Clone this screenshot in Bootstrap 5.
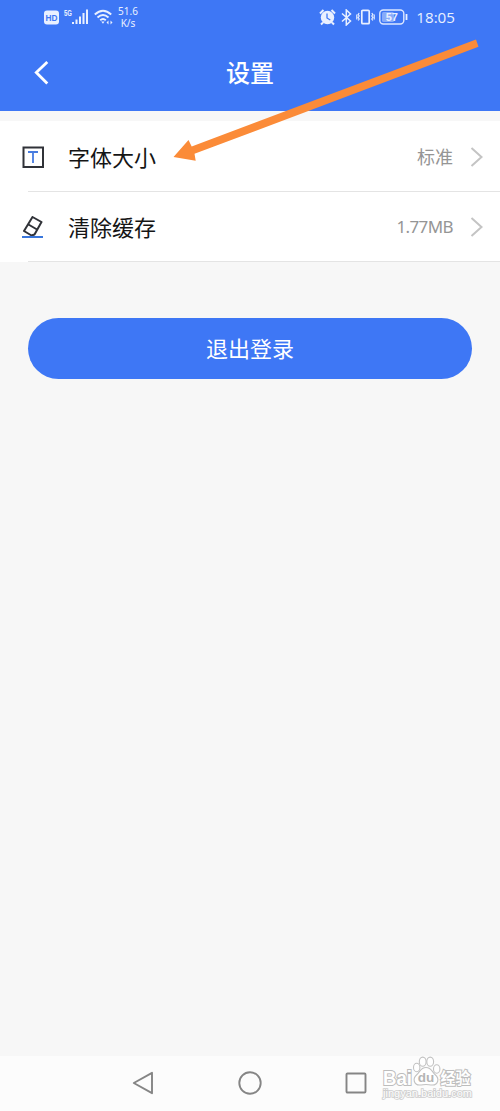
<!DOCTYPE html>
<html lang="zh-CN">
<head>
<meta charset="utf-8">
<meta name="viewport" content="width=device-width, initial-scale=1">
<title>设置</title>
<link href="https://cdn.jsdelivr.net/npm/bootstrap@5.3.0/dist/css/bootstrap.min.css" rel="stylesheet">
<style>
body{font-family:"Noto Sans","Noto Sans CJK SC",sans-serif;background:#f7f7f7;color:#151515}
svg{display:block;flex:none}
.screen{height:1111px}
.bg-brand{background:#3e77f5}
.status{height:34px;padding:0 45px 0 44px;color:#e9f0ff}
.speed{font-size:10px;line-height:12px;width:26px;margin-left:2px}
.clock{font-size:15.2px;line-height:20px;margin-left:8px;font-family:"Open Sans","Noto Sans",sans-serif}
.titlebar{height:77px;padding:0 34px}
.titlebar h1{font-size:24px;line-height:30px;font-weight:500}
.side{width:16px}
.settings{margin-top:10px}
.settings .list-group-item{height:71px;padding:0 17px 0 22px;border:0;background:#fff;color:inherit}
.settings .list-group-item + .list-group-item{height:70px}
.settings .list-group-item::after{content:"";position:absolute;left:28px;right:0;bottom:0;height:1px;background:#e4e4e4}
.name{font-size:22px;line-height:30px;margin-left:24px}
.value{font-size:18px;line-height:26px;color:#959595;margin-right:17px}
.size-value{font-size:17px;letter-spacing:-.6px}
.logout{height:61px;margin:56px 28px 0;font-size:22px;color:#fff;line-height:30px;padding:0 0 2px}
.logout:hover{background:#3e77f5;color:#fff}
.sysnav{height:55px;background:#fcfcfc;padding:0 133px 2px 132px}
.pointer{left:170px;top:36px;pointer-events:none}
.watermark{left:380px;bottom:8px}
</style>
</head>
<body>
<div class="screen d-flex flex-column position-relative overflow-hidden">
  <header class="bg-brand text-white">
    <div class="status d-flex align-items-center">
      <svg width="15" height="15" viewBox="0 0 15 15"><rect width="15" height="14" y=".5" rx="3" fill="#e9f0ff"/><text x="7.5" y="11" text-anchor="middle" font-size="8.6" font-weight="700" font-family="Liberation Sans, sans-serif" fill="#3e77f5" textLength="12" lengthAdjust="spacingAndGlyphs">HD</text></svg>
      <svg class="ms-1" width="27" height="18" viewBox="0 0 27 18" fill="#e9f0ff"><text x="1" y="7.5" font-size="8.5" font-weight="700" font-family="Liberation Sans, sans-serif" textLength="8" lengthAdjust="spacingAndGlyphs">5G</text><path d="M9 14h2v2H9zM12.500 11.500h2V16h-2zM16 8.500h2V16h-2zM19.500 5h2v11h-2zM23 1.500h2V16h-2z"/></svg>
      <svg class="ms-1" width="19" height="18" viewBox="0 0 19 18" fill="none" stroke="#e9f0ff" stroke-width="1.900"><path d="M.8 6.500Q9 -1.200 17.200 6.500M3.500 9.500Q9 4.300 14.500 9.500M6.200 12.300Q9 9.800 11.800 12.300"/><path d="M7.200 13.500L9 15.700L10.500 13.500Z" fill="#e9f0ff" stroke="none"/><path d="M12.500 14.500l2-2v4zM18.500 14.500l-2-2v4z" fill="#e9f0ff" stroke="none"/></svg>
      <div class="speed text-center">51.6<br>K/s</div>
      <svg class="ms-auto" width="17" height="17" viewBox="0 0 17 17"><circle cx="8.500" cy="8.500" r="6.700" fill="#e9f0ff"/><path d="M1 4.500L4.500 1M12.500 1L16 4.500M4 13.500l-2 2M13 13.500l2 2" stroke="#e9f0ff" stroke-width="2"/><path d="M8 4.500v4.500l3.300 2" fill="none" stroke="#3e77f5" stroke-width="1.300"/></svg>
      <svg style="margin-left:5px" width="11" height="17" viewBox="0 0 11 17" fill="none" stroke="#e9f0ff" stroke-width="1.500"><path d="M1 4.500l8.500 7.500-4.200 4V1l4.200 4L1 12.500"/></svg>
      <svg class="ms-1" width="19" height="16" viewBox="0 0 19 16" fill="none" stroke="#e9f0ff"><rect x="5.800" y="1.300" width="7.400" height="13.400" rx="1" stroke-width="1.700"/><path d="M3.200 4l-1 1.500 1 1.500-1 1.500 1 1.500-1 1.500M15.800 4l1 1.500-1 1.500 1 1.500-1 1.500 1 1.500M.8 5.500v5M18.200 5.500v5" stroke-width="1.200"/></svg>
      <svg class="ms-1" width="29" height="16" viewBox="0 0 29 16"><rect x=".8" y="1" width="24" height="14" rx="3.500" fill="none" stroke="#dce7ff" stroke-width="1.400"/><rect x="3" y="3" width="12" height="10" rx="1.500" fill="#87abfa"/><path d="M27.500 5v6" stroke="#e9f0ff" stroke-width="1.800"/><text x="12.800" y="12" text-anchor="middle" font-size="11" font-weight="700" font-family="Liberation Sans, sans-serif" fill="#e9f0ff">57</text></svg>
      <span class="clock">18:05</span>
    </div>
    <div class="titlebar d-flex justify-content-between align-items-center">
      <svg class="side" width="16" height="24" viewBox="0 0 16 24"><path d="M13.300 1L2.300 11.500l11 11" fill="none" stroke="#fff" stroke-width="2.800"/></svg>
      <h1 class="m-0">设置</h1>
      <span class="side"></span>
    </div>
  </header>

  <main class="flex-grow-1">
    <div class="settings list-group list-group-flush">
      <div class="list-group-item d-flex align-items-center">
        <svg width="22" height="22" viewBox="0 0 22 22" fill="none"><rect x="1.500" y="1.500" width="19.500" height="19.500" stroke="#303238" stroke-width="2"/><path d="M6 6h10M11 6v11" stroke="#477ce0" stroke-width="1.800"/></svg>
        <span class="name">字体大小</span>
        <span class="value ms-auto">标准</span>
        <svg width="13" height="20" viewBox="0 0 13 20"><path d="M1.500 1l10 9-10 9" fill="none" stroke="#c4c4c4" stroke-width="2"/></svg>
      </div>
      <div class="list-group-item d-flex align-items-center">
        <svg width="22" height="22" viewBox="0 0 22 22" fill="none"><path d="M10.500 1L19.500 6 12.500 18.500 9.500 19.500 2 15zM6.500 8.500l8.500 5" stroke="#303238" stroke-width="2" stroke-linejoin="round"/><path d="M0 21h21" stroke="#3976dc" stroke-width="2"/></svg>
        <span class="name">清除缓存</span>
        <span class="value size-value ms-auto">1.77MB</span>
        <svg width="13" height="20" viewBox="0 0 13 20"><path d="M1.500 1l10 9-10 9" fill="none" stroke="#c4c4c4" stroke-width="2"/></svg>
      </div>
    </div>
    <div class="d-grid"><button type="button" class="btn bg-brand rounded-pill logout border-0">退出登录</button></div>
  </main>

  <nav class="sysnav d-flex align-items-center justify-content-between">
    <svg width="22" height="24" viewBox="0 0 22 24"><path d="M20 1.800v20.400L1.800 12z" fill="none" stroke="#858585" stroke-width="1.900" stroke-linejoin="round"/></svg>
    <svg width="24" height="24" viewBox="0 0 24 24"><circle cx="12" cy="12" r="10.700" fill="none" stroke="#858585" stroke-width="1.900"/></svg>
    <svg width="22" height="22" viewBox="0 0 22 22"><rect x="1.500" y="1.500" width="19" height="19" rx="1" fill="none" stroke="#858585" stroke-width="1.900"/></svg>
  </nav>

  <svg class="pointer position-absolute" width="312" height="128" viewBox="0 0 312 128"><path d="M306 3.500L308.500 10.800 24.500 117.800 25.700 124.800 3.500 121 18.500 104 21.700 110.500z" fill="#fb8b38"/></svg>

  <svg class="watermark position-absolute" width="96" height="48" viewBox="0 0 96 48" font-family="Liberation Sans, Noto Sans CJK SC, sans-serif" font-weight="700">
    <g fill="#fff" stroke="#bdbdbd" stroke-width="2" paint-order="stroke"><text x="3" y="29.500" font-size="19.500" textLength="29" lengthAdjust="spacingAndGlyphs">Bai</text><text x="60.500" y="28.500" font-size="15.500" textLength="30" lengthAdjust="spacingAndGlyphs">经验</text></g>
    <g fill="#fff" stroke="#c2c2c2" stroke-width="1.100"><ellipse cx="36.700" cy="12.500" rx="3.200" ry="4.300"/><ellipse cx="42.700" cy="6.700" rx="3.400" ry="4.600"/><ellipse cx="50.200" cy="6.700" rx="3.400" ry="4.600"/><ellipse cx="56.700" cy="14" rx="3.200" ry="4.300"/><path d="M46 12.500c5.500 0 6 4.500 9 7 5 4 3 10.500-2.500 10.500-3 0-4-.5-6.500-.5s-3.500.5-6.500.5c-5.500 0-7.500-6.500-2.500-10.500 3-2.500 3.500-7 9-7z"/></g>
    <text x="46" y="27" text-anchor="middle" font-size="13.500" fill="#b5b5b5">du</text>
    <text x="3" y="41.500" font-size="10" font-weight="400" textLength="89" lengthAdjust="spacingAndGlyphs" fill="#fff" stroke="#cdcdcd" stroke-width="1.600" paint-order="stroke">jingyan.baidu.com</text>
  </svg>
</div>
<script src="https://cdn.jsdelivr.net/npm/bootstrap@5.3.0/dist/js/bootstrap.bundle.min.js"></script>
</body>
</html>
